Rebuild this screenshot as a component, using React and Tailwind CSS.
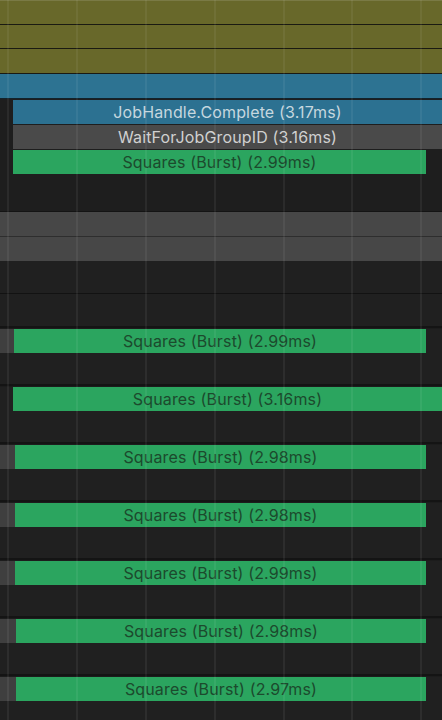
const GRID_X = [7, 76, 145, 214, 283, 351, 420];

const squares = [
  { ms: '2.99', left: 14, full: false, stub: true },
  { ms: '3.16', left: 13, full: true, stub: false },
  { ms: '2.98', left: 15, full: false, stub: true },
  { ms: '2.98', left: 15, full: false, stub: true },
  { ms: '2.99', left: 15, full: false, stub: true },
  { ms: '2.98', left: 16, full: false, stub: true },
  { ms: '2.97', left: 16, full: false, stub: true },
];

function Bar({ children, className }) {
  return (
    <div className={'flex items-center justify-center h-full text-[16px] tracking-[0.15px] whitespace-nowrap ' + className}>
      {children}
    </div>
  );
}

function SquaresGroup({ item }) {
  return (
    <div className="flex flex-col h-[58px] border-t-2 border-[#141414]">
      <div className="h-px bg-[#1c1c1c]" />
      <div className="flex h-[24px]">
        <div className={item.stub ? 'bg-[#3f3f3f]' : 'bg-[#202020]'} style={{ width: item.left }} />
        <div className={item.full ? 'flex-1' : 'flex-1 pr-[16px]'}>
          <Bar className="bg-[#2ba55f] text-[#1c4a2d]">Squares (Burst) ({item.ms}ms)</Bar>
        </div>
      </div>
      <div className="flex-1 bg-[#202020]" />
    </div>
  );
}

export default function App() {
  return (
    <div className="relative w-[442px] h-[720px] overflow-hidden bg-[#202020]" style={{ fontFamily: 'Inter, "Noto Sans", sans-serif' }}>
      <div className="flex flex-col">
        <div className="h-[25px] bg-[#68682a] border-t border-[#7a7a45] border-b border-b-[#1a1a12]" />
        <div className="h-[24px] bg-[#68682a] border-b border-[#1a1a12]" />
        <div className="h-[25px] bg-[#68682a] border-b border-[#1a1a12]" />
        <div className="h-[25px] bg-[#2d7392] border-b border-[#13232b]" />

        <div className="flex flex-col gap-px pt-px pl-[13px] h-[112px] bg-[#1e1e1e]">
          <div className="h-[24px]">
            <Bar className="bg-[#2c7191] text-[#c6d7df]">JobHandle.Complete (3.17ms)</Bar>
          </div>
          <div className="h-[24px]">
            <Bar className="bg-[#4a4a4a] text-[#d0d0d0]">WaitForJobGroupID (3.16ms)</Bar>
          </div>
          <div className="h-[24px] pr-[16px]">
            <Bar className="bg-[#2ba55f] text-[#1c4a2d]">Squares (Burst) (2.99ms)</Bar>
          </div>
        </div>

        <div className="h-[26px] bg-[#474747] border-t border-[#141414] border-b border-b-[#2e2e2e]" />
        <div className="h-[24px] bg-[#474747]" />
        <div className="h-[33px] bg-[#202020] border-b border-[#121212]" />
        <div className="h-[32px] bg-[#202020]" />

        {squares.map((item, i) => (
          <SquaresGroup key={i} item={item} />
        ))}
      </div>

      <div className="absolute inset-0 pointer-events-none">
        {GRID_X.map((x) => (
          <div key={x} className="absolute top-0 bottom-0 w-[2px] bg-white/[0.06]" style={{ left: x }} />
        ))}
      </div>
    </div>
  );
}
